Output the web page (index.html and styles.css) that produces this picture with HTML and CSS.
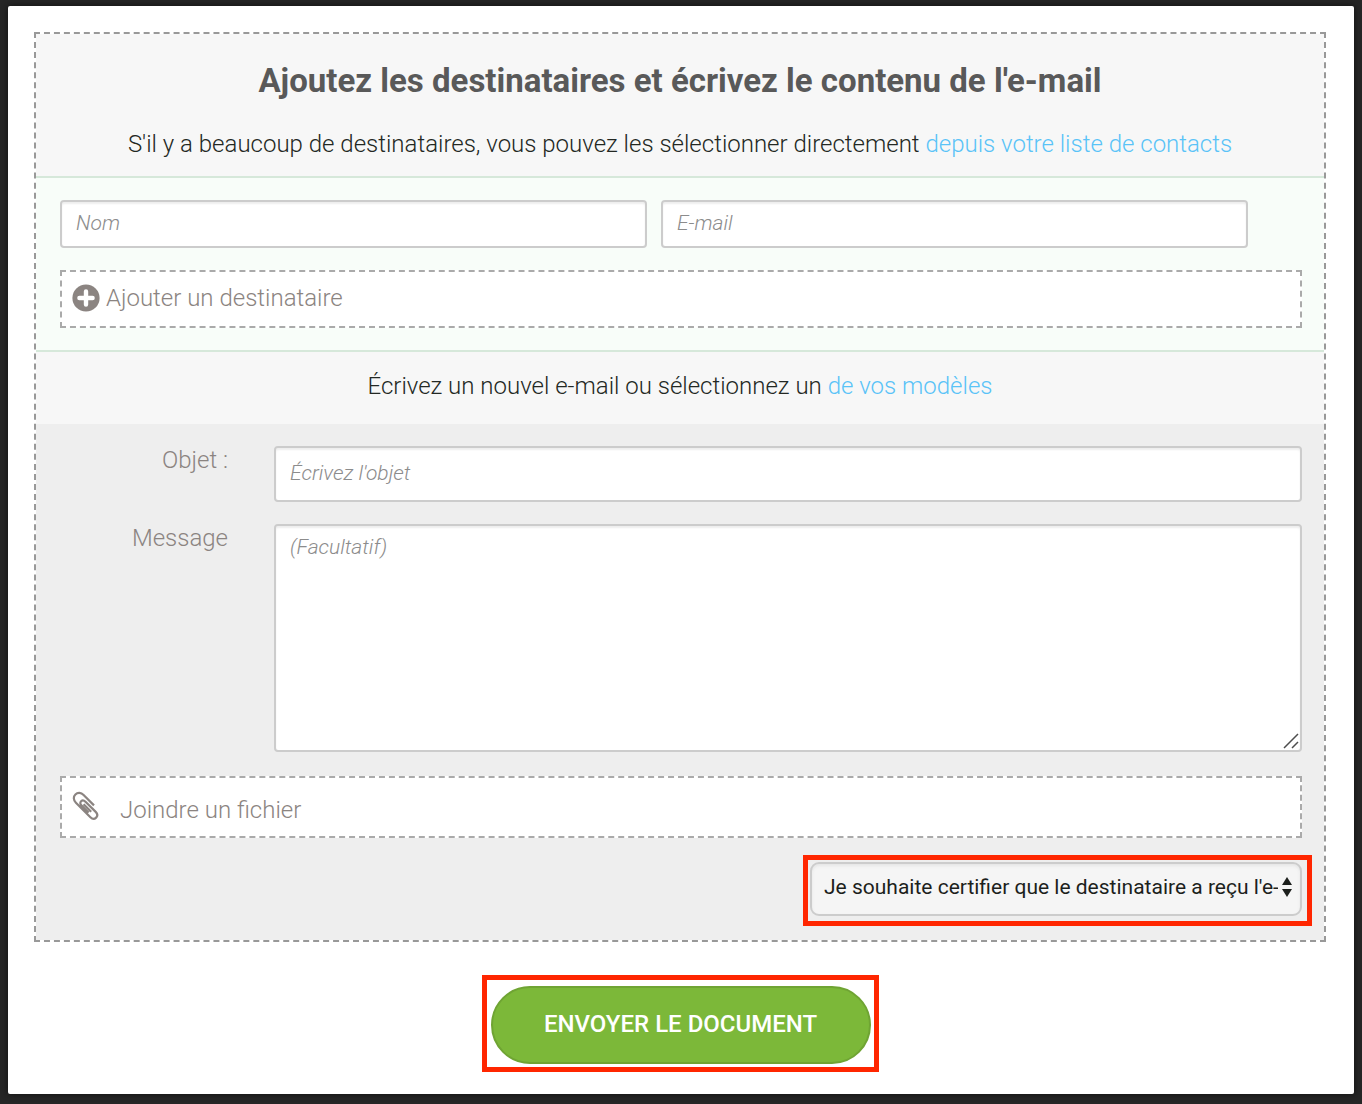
FILE: index.html
```html
<!DOCTYPE html>
<html lang="fr">
<head>
<meta charset="utf-8">
<meta name="viewport" content="width=device-width, initial-scale=1">
<title>Envoyer le document</title>
<link rel="stylesheet" href="styles.css">
</head>
<body>
<main class="modal">
  <form class="form">
    <div class="panel">
      <header class="intro">
        <h1 class="title">Ajoutez les destinataires et écrivez le contenu de l'e-mail</h1>
        <p class="lead">S'il y a beaucoup de destinataires, vous pouvez les sélectionner directement <a class="link" href="#contacts">depuis votre liste de contacts</a></p>
      </header>
      <section class="recipients">
        <div class="recipient">
          <input class="field" type="text" placeholder="Nom" aria-label="Nom">
          <input class="field" type="email" placeholder="E-mail" aria-label="E-mail">
        </div>
        <button class="dashed add" type="button">
          <svg class="add-icon" viewBox="0 0 28 28" aria-hidden="true"><circle cx="14" cy="14" r="13.6" fill="#8b8481"/><path d="M14 7.4v13.2M7.4 14h13.2" stroke="#fff" stroke-width="4.4" stroke-linecap="round"/></svg>
          <span>Ajouter un destinataire</span>
        </button>
      </section>
      <p class="lead templates">Écrivez un nouvel e-mail ou sélectionnez un <a class="link" href="#modeles">de vos modèles</a></p>
      <section class="message">
        <div class="row">
          <label class="label" for="subject">Objet :</label>
          <input class="field subject" id="subject" type="text" placeholder="Écrivez l'objet">
        </div>
        <div class="row">
          <label class="label" for="body">Message</label>
          <div class="area">
            <textarea class="field body" id="body" placeholder="(Facultatif)"></textarea>
            <svg class="grip" viewBox="0 0 16 16" aria-hidden="true"><path d="M1 15 15 1M9 15l6-6" stroke="#4d4d4d" stroke-width="1.5"/></svg>
          </div>
        </div>
        <button class="dashed attach" type="button">
          <svg class="clip-icon" viewBox="0 0 28 30" fill="none" stroke="#8b8481" stroke-width="2.2" aria-hidden="true"><path d="M22 14.400 11.600 4C9 1.400 5.600 1.300 3.400 3.500 1.200 5.700 1.300 9.100 3.900 11.700L18.400 26.200C20.200 28 22.500 28.200 24.100 26.600 25.700 25 25.500 22.700 23.700 20.900L13.500 10.700C12 9.200 10.300 9 9.100 10.200 7.900 11.400 8.100 13.100 9.600 14.600L16.600 21.600M11.600 13.200 19.200 20.800"/></svg>
          <span>Joindre un fichier</span>
        </button>
      </section>
      <div class="certify">
        <div class="highlight highlight-select">
          <select class="select" aria-label="Certification">
            <option>Je souhaite certifier que le destinataire a reçu l'e-mail</option>
            <option>Ne pas certifier</option>
          </select>
          <svg class="arrows" viewBox="0 0 12 20" aria-hidden="true"><path d="M6 0l5 8H1zM6 20l5-8H1z" fill="#1c1f1c"/></svg>
        </div>
      </div>
    </div>
    <div class="highlight highlight-send">
      <button class="send" type="submit">ENVOYER LE DOCUMENT</button>
    </div>
  </form>
</main>
</body>
</html>
```
FILE: styles.css
```css
* {
  box-sizing: border-box;
}

body {
  margin: 0;
  padding: 6px 8px 10px;
  background: #262626;
  color: #232823;
  font: 300 24px/32px Roboto, sans-serif;
}

h1,
p {
  margin: 0;
}

button,
input,
select,
textarea {
  font: inherit;
}

.modal {
  padding: 26px 28px 22px 26px;
  background: #fff;
  border-radius: 2px;
  box-shadow: 0 0 6px #111;
}

.form {
  display: flex;
  flex-direction: column;
  align-items: center;
  gap: 33px;
}

.panel {
  width: 100%;
  border: 2px dashed #999;
}

.intro {
  padding: 27px 24px 16px;
  background: #f7f7f7;
  text-align: center;
}

.title {
  margin-bottom: 27px;
  color: #595959;
  font-size: 33px;
  font-weight: 700;
  line-height: 40px;
}

.lead {
  text-align: center;
}

.link {
  color: #5ac3f7;
  text-decoration: none;
}

.recipients {
  display: flex;
  flex-direction: column;
  gap: 22px;
  padding: 22px 22px 22px 24px;
  background: #f8fdf9;
  border: solid #d6e8da;
  border-width: 2px 0;
}

.recipient {
  display: flex;
  gap: 14px;
  padding-right: 54px;
}

.field {
  flex: 1;
  min-width: 0;
  height: 48px;
  padding: 0 14px 2px;
  background: #fff;
  border: 2px solid #ccc;
  border-radius: 4px;
  box-shadow: inset 0 2px 2px #eee;
  color: #232823;
  font-size: 21px;
  line-height: 28px;
}

.field::placeholder {
  color: #8c8c8c;
  font-style: italic;
  opacity: 1;
}

.dashed {
  display: flex;
  align-items: center;
  width: 100%;
  padding: 0 10px;
  background: #fff;
  border: 2px dashed #aaa;
  color: #8b8481;
  text-align: left;
}

.add {
  gap: 6px;
  height: 58px;
  padding-bottom: 2px;
}

.add-icon {
  width: 28px;
  height: 28px;
}

.templates {
  padding: 18px 24px 22px;
  background: #f7f7f7;
}

.message {
  display: flex;
  flex-direction: column;
  gap: 22px;
  padding: 22px 22px 0 24px;
  background: #eee;
}

.row {
  display: flex;
  gap: 46px;
}

.label {
  width: 168px;
  color: #8b8481;
  line-height: 28px;
  text-align: right;
}

.subject {
  height: 56px;
}

.area {
  display: flex;
  flex: 1;
  position: relative;
}

.body {
  height: 228px;
  padding: 7px 14px;
  resize: none;
}

.grip {
  position: absolute;
  right: 3px;
  bottom: 3px;
  width: 16px;
  height: 16px;
}

.attach {
  gap: 20px;
  height: 62px;
  margin-top: 2px;
  padding-top: 6px;
}

.clip-icon {
  width: 28px;
  height: 30px;
  margin-bottom: 8px;
}

.certify {
  display: flex;
  justify-content: flex-end;
  padding: 17px 12px 14px;
  background: #eee;
}

.highlight {
  border: 5px solid #ff2600;
}

.highlight-select {
  position: relative;
  padding: 2px 5px 5px 2px;
}

.select {
  display: block;
  width: 492px;
  max-width: 100%;
  height: 54px;
  padding: 0 22px 4px 12px;
  appearance: none;
  background: #f5f5f5;
  border: 2px solid #ccc;
  border-radius: 9px;
  box-shadow: inset 0 2px 3px #e6e6e6;
  color: #1c1f1c;
  font-size: 21px;
  font-weight: 400;
}

.arrows {
  position: absolute;
  top: 17px;
  right: 14px;
  width: 12px;
  height: 20px;
  pointer-events: none;
}

.highlight-send {
  padding: 6px 3px 3px 4px;
}

.send {
  display: block;
  width: 380px;
  height: 78px;
  padding: 0 16px 2px;
  background: #7cb839;
  border: 2px solid #6fa433;
  border-radius: 39px;
  color: #fff;
  font-size: 24px;
  font-weight: 500;
}
```
